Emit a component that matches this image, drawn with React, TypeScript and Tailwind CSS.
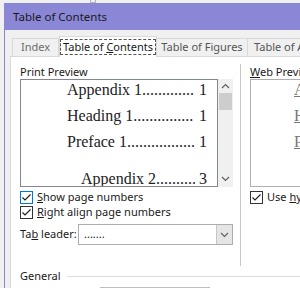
import React from 'react';

const Check = ({ blue }: { blue?: boolean }) => (
  <span
    className={`w-[13px] h-[13px] shrink-0 bg-white border flex items-center justify-center ${
      blue ? 'border-[#0078d7]' : 'border-[#333333]'
    }`}
  >
    <svg width="11" height="11" viewBox="0 0 11 11">
      <polyline points="1.5,5.5 4,8 9.5,2.5" fill="none" stroke="#1a1a1a" strokeWidth="1.1" />
    </svg>
  </span>
);

const Chevron = ({ up }: { up?: boolean }) => (
  <svg width="9" height="6" viewBox="0 0 9 6">
    <polyline
      points={up ? '1,5 4.5,1.5 8,5' : '1,1 4.5,4.5 8,1'}
      fill="none"
      stroke="#606060"
      strokeWidth="1.2"
    />
  </svg>
);

const Entry = ({ label, dots, page, indent }: { label: string; dots: string; page: string; indent: string }) => (
  <div className={`flex h-[20px] leading-[20px] whitespace-nowrap pr-[10px] ${indent}`}>
    <span>{label}</span>
    <span className="flex-1 min-w-0 overflow-hidden">{dots}</span>
    <span className="pl-[4px]">{page}</span>
  </div>
);

export default function App() {
  return (
    <div className="w-[300px] h-[288px] overflow-hidden bg-[#f0f0f0] font-['Noto_Sans',sans-serif] text-[11px] text-[#1a1a1a]">
      <div className="h-[3px] flex">
        <div className="ml-[90px] w-[6px] h-[3px] border-x border-b border-[#b5b5b5]" />
      </div>
      <div className="ml-[4px] border-l border-[#8a87d6] h-[285px] flex flex-col">
        {/* title bar */}
        <div className="h-[27px] bg-[#8a87d6] flex items-center pl-[8px] shrink-0 text-[11.5px]">Table of Contents</div>

        <div className="flex-1 pl-[5px] pt-[6px] flex flex-col">
          {/* tabs */}
          <div className="flex items-end h-[21px] border-b border-[#d9d9d9] pl-[2px] whitespace-nowrap">
            <div className="shrink-0 h-[18px] w-[47px] border border-b-0 border-[#d9d9d9] flex items-center justify-center text-[#6d6d6d]">
              Index
            </div>
            <div className="shrink-0 relative -mb-px h-[21px] w-[98px] bg-white border border-b-0 border-[#d9d9d9] flex items-center justify-center">
              <span className="border border-dashed border-[#555] px-[2px] leading-[14px]">
                Table of <span className="underline">C</span>ontents
              </span>
            </div>
            <div className="shrink-0 h-[18px] w-[91px] border border-b-0 border-l-0 border-[#d9d9d9] flex items-center justify-center text-[#555]">
              Table of Figures
            </div>
            <div className="shrink-0 h-[18px] w-[110px] border border-b-0 border-l-0 border-[#d9d9d9] flex items-center pl-[6px] text-[#555]">
              Table of Authorities
            </div>
          </div>

          {/* panel */}
          <div className="flex-1 bg-white border-l border-[#d9d9d9] pl-[9px] flex flex-col">
            <div className="flex h-[209px]">
              {/* left column */}
              <div className="shrink-0 w-[213px] pt-[7px] flex flex-col">
                <div className="h-[15px] leading-[15px]">Print Preview</div>
                <div className="flex h-[108px]">
                  <div className="flex-1 border border-[#828790] overflow-hidden font-['Liberation_Serif',serif] text-[16px] text-[#222]">
                    <Entry label="Appendix 1" dots="............." page="1" indent="pl-[46px]" />
                    <div className="mt-[6px]">
                      <Entry label="Heading 1 " dots="..............." page="1" indent="pl-[46px]" />
                    </div>
                    <div className="mt-[6px]">
                      <Entry label="Preface 1" dots="................." page="1" indent="pl-[46px]" />
                    </div>
                    <div className="mt-[17px]">
                      <Entry label="Appendix 2" dots=".........." page="3" indent="pl-[60px]" />
                    </div>
                  </div>
                  <div className="w-[15px] bg-[#f0f0f0] flex flex-col items-center">
                    <div className="h-[14px] flex items-center justify-center">
                      <Chevron up />
                    </div>
                    <div className="w-[13px] h-[17px] bg-[#cdcdcd]" />
                    <div className="flex-1" />
                    <div className="h-[14px] flex items-center justify-center mb-[1px]">
                      <Chevron />
                    </div>
                  </div>
                </div>
                <div className="mt-[3px] h-[15px] flex items-center gap-[4px] whitespace-nowrap">
                  <Check blue />
                  <span>
                    <span className="underline">S</span>how page numbers
                  </span>
                </div>
                <div className="h-[15px] flex items-center gap-[4px] whitespace-nowrap">
                  <Check />
                  <span>
                    <span className="underline">R</span>ight align page numbers
                  </span>
                </div>
                <div className="mt-[4px] h-[21px] flex items-center whitespace-nowrap">
                  <span className="w-[58px]">
                    Ta<span className="underline">b</span> leader:
                  </span>
                  <div className="flex-1 h-[21px] border border-[#adadad] flex">
                    <span className="flex-1 pl-[5px] leading-[17px]">.......</span>
                    <span className="w-[16px] bg-[#e5e5e5] border-l border-[#c6c6c6] flex items-center justify-center">
                      <Chevron />
                    </span>
                  </div>
                </div>
              </div>

              {/* separator */}
              <div className="shrink-0 ml-[7px] mt-[7px] w-px bg-[#c8c8c8]" />

              {/* right column */}
              <div className="shrink-0 ml-[9px] w-[120px] pt-[7px] flex flex-col whitespace-nowrap">
                <div className="h-[15px] leading-[15px]">
                  <span className="underline">W</span>eb Preview
                </div>
                <div className="h-[108px] border border-[#adadad] pl-[43px] font-['Liberation_Serif',serif] text-[16px] text-[#777]">
                  <div className="h-[20px] leading-[20px] underline">Appendix 1</div>
                  <div className="mt-[6px] h-[20px] leading-[20px] underline">Heading 1</div>
                  <div className="mt-[6px] h-[20px] leading-[20px] underline">Preface 1</div>
                </div>
                <div className="mt-[3px] h-[15px] flex items-center gap-[4px]">
                  <Check />
                  <span>
                    Use <span className="underline">h</span>yperlinks instead of page numbers
                  </span>
                </div>
              </div>
            </div>

            {/* General */}
            <div className="h-[20px] flex items-center">
              <span>General</span>
              <div className="flex-1 h-px bg-[#dcdcdc] ml-[6px]" />
            </div>
            <div className="mt-[1px] ml-[80px] w-[110px] border-t border-[#bdbdbd]" />
          </div>
        </div>
      </div>
    </div>
  );
}
